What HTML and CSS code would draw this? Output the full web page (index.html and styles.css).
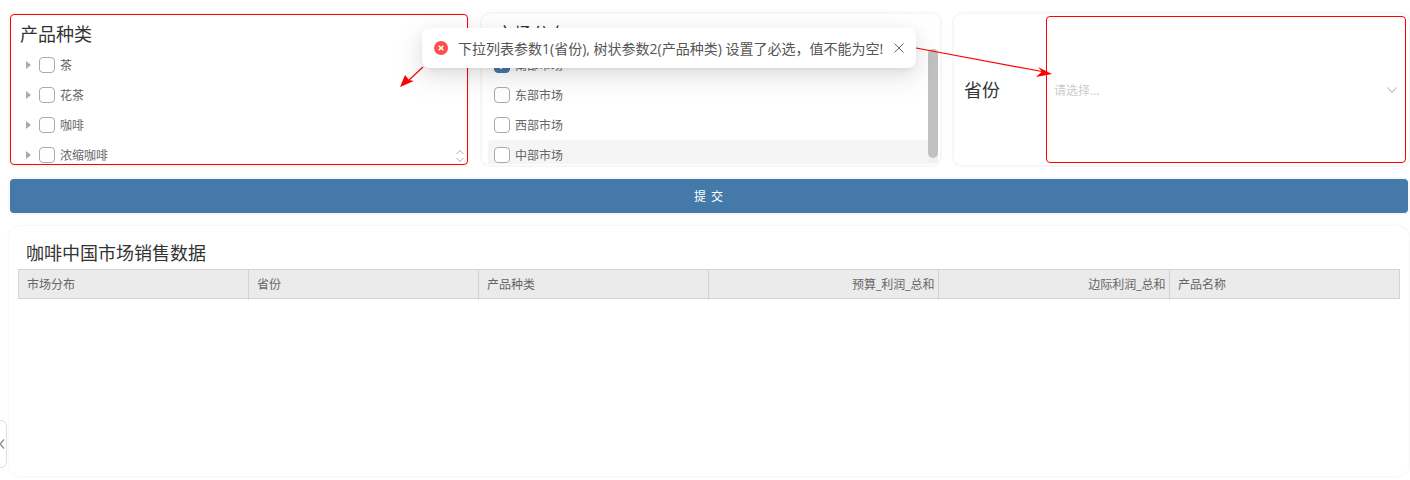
FILE: index.html
```html
<!DOCTYPE html>
<html lang="zh">
<head>
<meta charset="utf-8">
<title>咖啡中国市场销售数据</title>
<link rel="stylesheet" href="styles.css">
</head>
<body>
<main class="page">
  <section class="filters">
    <div class="card invalid tree-card">
      <h2 class="card-title">产品种类</h2>
      <ul class="list">
        <li class="row"><span class="caret"></span><span class="check"></span><span class="label">茶</span></li>
        <li class="row"><span class="caret"></span><span class="check"></span><span class="label">花茶</span></li>
        <li class="row"><span class="caret"></span><span class="check"></span><span class="label">咖啡</span></li>
        <li class="row"><span class="caret"></span><span class="check"></span><span class="label">浓缩咖啡</span></li>
      </ul>
      <svg class="resize" width="10" height="14" viewBox="0 0 10 14"><path d="M1.5 5 5 1.5 8.500 5M1.500 9 5 12.500 8.500 9" fill="none" stroke="#aaa"/></svg>
    </div>
    <div class="card list-card">
      <h2 class="card-title">市场分布</h2>
      <ul class="list">
        <li class="row"><span class="check on"><svg width="16" height="16" viewBox="0 0 16 16"><path d="M4 8l3 3 5-6" fill="none" stroke="#fff" stroke-width="1.500"/></svg></span><span class="label">南部市场</span></li>
        <li class="row"><span class="check"></span><span class="label">东部市场</span></li>
        <li class="row"><span class="check"></span><span class="label">西部市场</span></li>
        <li class="row hover"><span class="check"></span><span class="label">中部市场</span></li>
      </ul>
      <div class="scrollbar"><div class="thumb"></div></div>
    </div>
    <div class="card select-card">
      <h2 class="select-label">省份</h2>
      <div class="select invalid">
        <span class="placeholder">请选择...</span>
        <svg width="12" height="8" viewBox="0 0 12 8"><path d="M1.500 1.500 6 6.500l4.500-5" fill="none" stroke="#ccc" stroke-width="1.200"/></svg>
      </div>
    </div>
  </section>

  <div class="submit-wrap"><button class="submit" type="button">提 交</button></div>

  <section class="card table-card">
    <h2 class="table-title">咖啡中国市场销售数据</h2>
    <div class="thead">
      <div class="th">市场分布</div>
      <div class="th">省份</div>
      <div class="th">产品种类</div>
      <div class="th num">预算_利润_总和</div>
      <div class="th num">边际利润_总和</div>
      <div class="th">产品名称</div>
    </div>
  </section>
</main>

<div class="side-handle"><svg width="6" height="12" viewBox="0 0 6 12"><path d="M5 1.500 1 6l4 4.500" fill="none" stroke="#888" stroke-width="1.200"/></svg></div>

<svg class="arrows" width="1410" height="480" viewBox="0 0 1410 480">
  <path d="M423 67 409 80" stroke="#f00" stroke-width="1.200" fill="none"/>
  <path d="M400 87 405 75 409 80 414 81Z" fill="#f00"/>
  <path d="M916 48 1042 71.500" stroke="#f00" stroke-width="1.200" fill="none"/>
  <path d="M1052 74 1038 67 1042 71.500 1036 77Z" fill="#f00"/>
</svg>

<div class="toast" role="alert">
  <svg class="toast-icon" width="14" height="14" viewBox="0 0 14 14"><circle cx="7" cy="7" r="7" fill="#ff4d4f"/><path d="M4.700 4.700l4.600 4.600M9.300 4.700 4.700 9.300" stroke="#fff" stroke-width="1.500"/></svg>
  <span class="toast-text">下拉列表参数1(省份), 树状参数2(产品种类) 设置了必选，值不能为空!</span>
  <svg class="toast-close" width="10" height="10" viewBox="0 0 10 10"><path d="M.5.5l9 9M9.500.5l-9 9" stroke="#666" stroke-width="1"/></svg>
</div>
</body>
</html>
```
FILE: styles.css
```css
* { box-sizing: border-box; }
html, body { margin: 0; height: 480px; overflow: hidden; background: #fff; }
body { font-family: "Open Sans", "Noto Sans CJK SC", sans-serif; color: #333; position: relative; }
h2 { margin: 0; font-weight: 400; }
ul { margin: 0; padding: 0; list-style: none; }

.page { padding: 14px 1px 0 10px; display: flex; flex-direction: column; }
.filters { display: grid; grid-template-columns: 458px 458px 456px; column-gap: 14px; height: 151px; }

.card { position: relative; background: #fff; border-radius: 8px; box-shadow: 0 0 2px 2px #f6f6f6; overflow: hidden; }
.invalid { border: 1px solid #f00; border-radius: 4px; }
.tree-card { border-radius: 4px; }

.card-title { font-size: 18px; line-height: 26px; color: #333; padding: 6px 0 0 9px; height: 35px; }
.list-card .card-title { height: 36px; padding-top: 7px; padding-left: 14px; }
.list { height: 114px; overflow: hidden; }
.row { height: 30px; display: flex; align-items: center; font-size: 12px; color: #666; }
.row.hover { background: #f5f5f5; border-radius: 4px; }

.tree-card .list { padding-left: 15px; height: 115px; }
.caret { width: 0; height: 0; border-left: 5px solid #aaa; border-top: 4px solid transparent; border-bottom: 4px solid transparent; margin-right: 8px; }
.check { width: 16px; height: 16px; border: 1px solid #aaa; border-radius: 4px; background: #fff; margin-right: 5px; flex: none; display: flex; }
.check.on { background: #4579aa; border-color: #4579aa; }
.label { line-height: 16px; padding-top: 2px; }

.resize { position: absolute; right: 2px; bottom: 1px; }

.list-card .list { margin: 0 6px; }
.list-card .row { padding-left: 6px; }
.scrollbar { position: absolute; top: 35px; right: 2px; bottom: 2px; width: 10px; background: #f1f1f1; }
.thumb { position: absolute; left: 0; right: 0; top: 0; bottom: 5px; background: #c1c1c1; border-radius: 5px; }

.select-card { display: flex; padding: 2px 3px 2px 0; margin-right: 1px; align-items: stretch; }
.select-label { width: 92px; padding: 0 0 2px 10px; font-size: 18px; display: flex; align-items: center; color: #333; }
.select { flex: 1; display: flex; align-items: center; justify-content: space-between; padding: 0 7px; }
.placeholder { font-size: 12px; color: #ccc; }

.submit-wrap { margin-top: 14px; width: 1398px; height: 34px; box-shadow: 0 0 2px 2px #f6f6f6; border-radius: 4px; }
.submit { display: block; width: 100%; height: 100%; border: 0; border-radius: 4px; background: #4579aa; color: #fff; font: 12px "Open Sans", "Noto Sans CJK SC", sans-serif; letter-spacing: 1px; padding: 0; }

.table-card { margin: 13px 0 0 -1px; width: 1400px; height: 250px; border-radius: 12px; padding: 0 9px; box-shadow: 0 0 2px 1px #f5f5f5; }
.table-title { font-size: 18px; line-height: 26px; padding: 14px 0 3px 8px; height: 43px; color: #333; }
.thead { display: grid; grid-template-columns: 229px 230px 230px 230px 231px 1fr; height: 30px; background: #ebebeb; border: 1px solid #d3d3d3; }
.th { font-size: 12px; color: #666; line-height: 30px; padding: 0 3.500px 0 8px; border-left: 1px solid #d3d3d3; }
.th:first-child { border-left: 0; }
.th.num { text-align: right; }

.side-handle { position: absolute; left: -4px; top: 420px; width: 11px; height: 48px; background: #fff; border: 1px solid #dde; border-radius: 0 6px 6px 0; display: flex; align-items: center; justify-content: flex-end; padding-right: 1px; }

.arrows { position: absolute; left: 0; top: 0; pointer-events: none; }

.toast { position: absolute; left: 422px; top: 28px; width: 494px; height: 40px; background: #fff; border-radius: 8px; display: flex; align-items: center; padding-left: 12px; box-shadow: 0 3px 6px -4px rgba(0,0,0,.12), 0 6px 16px 0 rgba(0,0,0,.08), 0 9px 28px 8px rgba(0,0,0,.05); }
.toast-icon { flex: none; margin-right: 10px; }
.toast-text { font-size: 14px; color: #555; white-space: nowrap; }
.toast-close { flex: none; margin-left: 11px; }
```
